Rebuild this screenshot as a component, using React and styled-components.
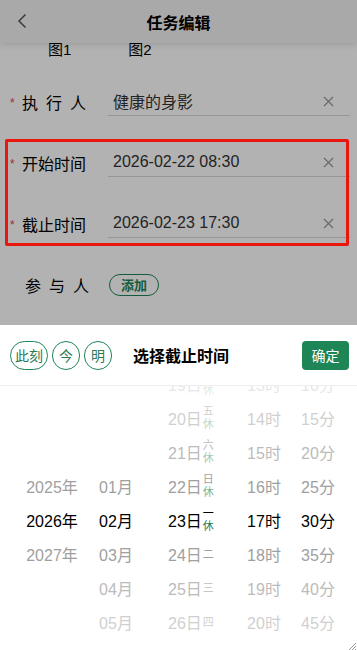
import styled, { createGlobalStyle } from 'styled-components';

const GlobalStyle = createGlobalStyle`
  html, body {
    margin: 0;
    padding: 0;
    background: #fff;
    font-family: "Liberation Sans", "Noto Sans CJK SC", sans-serif;
    overflow: hidden;
  }
  * { box-sizing: border-box; }
`;

const GREEN = '#1e8557';

const Page = styled.div`
  width: 357px;
  height: 650px;
  position: relative;
  overflow: hidden;
  background: #fff;
`;

const Header = styled.div`
  height: 43px;
  display: flex;
  align-items: center;
  justify-content: center;
  position: relative;
  background: #f2f2f2;
  box-shadow: 0 2px 6px rgba(0, 0, 0, 0.12);
  z-index: 2;
`;

const BackBtn = styled.div`
  position: absolute;
  left: 14px;
  top: 12px;
  width: 16px;
  height: 18px;
  display: flex;
  align-items: center;
  justify-content: center;
`;

const Title = styled.div`
  font-size: 16px;
  font-weight: bold;
  color: #000;
`;

const Tabs = styled.div`
  display: flex;
  gap: 57px;
  padding-left: 48px;
  height: 29px;
  font-size: 15px;
  line-height: 15px;
  margin-top: -1px;
  color: #000;
`;

const Form = styled.div`
  display: flex;
  flex-direction: column;
`;

const Group = styled.div`
  position: relative;
  &::after {
    content: '';
    position: absolute;
    left: 5px;
    right: 8px;
    top: 7px;
    bottom: 8px;
    border: 3px solid #e8160c;
    border-radius: 2px;
    z-index: 20;
  }
`;

const Row = styled.div`
  height: 61px;
  display: flex;
  align-items: center;
  padding-right: 7px;
`;

const Star = styled.span`
  width: 22px;
  padding-left: 10px;
  color: #e64340;
  font-size: 12px;
  visibility: ${(p) => (p.$hide ? 'hidden' : 'visible')};
  margin-top: 2px;
`;

const Label = styled.div`
  width: 64px;
  display: flex;
  justify-content: space-between;
  font-size: 16px;
  color: #000;
  margin-left: ${(p) => (p.$shift ? '3px' : '0')};
`;

const Field = styled.div`
  flex: 1;
  margin-left: 22px;
  height: 28px;
  border-bottom: 1px solid #d8d8d8;
  display: flex;
  align-items: center;
  padding-left: 5px;
  padding-right: 16px;
  font-size: 16px;
  color: #333;
`;

const Value = styled.span`
  flex: 1;
`;

const AddPill = styled.div`
  margin-left: 20px;
  width: 50px;
  height: 22px;
  border: 1.5px solid ${GREEN};
  border-radius: 11px;
  color: ${GREEN};
  font-size: 13px;
  font-weight: bold;
  display: flex;
  align-items: center;
  justify-content: center;
`;

const Mask = styled.div`
  position: absolute;
  inset: 0;
  background: rgba(0, 0, 0, 0.3);
  z-index: 10;
`;

const Sheet = styled.div`
  position: absolute;
  left: 0;
  right: 0;
  bottom: 0;
  height: 325px;
  background: #fff;
  z-index: 30;
  display: flex;
  flex-direction: column;
`;

const SheetHead = styled.div`
  height: 61px;
  border-bottom: 1px solid #eeeeee;
  display: flex;
  align-items: center;
  padding: 0 8px 0 10px;
`;

const Quick = styled.div`
  display: flex;
  gap: 4px;
`;

const QuickBtn = styled.div`
  height: 29px;
  min-width: 28px;
  padding: 0 ${(p) => (p.$wide ? '4px' : '0')};
  border: 1px solid ${GREEN};
  border-radius: 15px;
  color: #2a7a52;
  font-size: 14px;
  display: flex;
  align-items: center;
  justify-content: center;
`;

const SheetTitle = styled.div`
  margin-left: 21px;
  flex: 1;
  font-size: 16px;
  font-weight: bold;
  color: #000;
`;

const Confirm = styled.div`
  width: 47px;
  height: 29px;
  border-radius: 4px;
  background: ${GREEN};
  color: #fff;
  font-size: 14px;
  display: flex;
  align-items: center;
  justify-content: center;
`;

const Wheel = styled.div`
  flex: 1;
  overflow: hidden;
  position: relative;
  display: grid;
  grid-template-columns: 76px 52px 96px 52px 56px;
  padding-left: 14px;
`;

const Column = styled.div`
  display: flex;
  flex-direction: column;
  margin-top: ${(p) => p.$offset}px;
`;

const Item = styled.div`
  height: 34px;
  flex: none;
  display: flex;
  align-items: center;
  justify-content: center;
  font-size: 16px;
  color: ${(p) => (p.$dist === 0 ? '#000' : '#8f8f8f')};
  opacity: ${(p) => [1, 0.85, 0.6, 0.42, 0.22][p.$dist] ?? 0.15};
`;

const DayItem = styled(Item)`
  justify-content: flex-start;
  padding-left: 26px;
`;

const Week = styled.div`
  display: flex;
  flex-direction: column;
  align-items: center;
  font-size: 11px;
  line-height: 13px;
  margin-left: 1px;
  color: ${(p) => (p.$dist === 0 ? '#000' : '#8f8f8f')};
`;

const Rest = styled.span`
  color: ${(p) => (p.$dist === 0 ? '#2a7a52' : '#5faa80')};
`;

const Grip = styled.div`
  position: absolute;
  right: 0;
  bottom: 0;
  width: 12px;
  height: 12px;
`;

const Close = () => (
  <svg width="11" height="11" viewBox="0 0 11 11">
    <path d="M1 1L10 10M10 1L1 10" stroke="#999" strokeWidth="1.3" fill="none" />
  </svg>
);

const rows = (list, sel) => list.map((t, i) => ({ t, d: Math.abs(i - sel) }));

const ROW = 34;
const CENTER = 117;

const WheelColumn = ({ list, sel }) => (
  <Column $offset={CENTER - sel * ROW}>
    {rows(list, sel).map((r) => (
      <Item key={r.t} $dist={r.d}>{r.t}</Item>
    ))}
  </Column>
);

const days = [
  { n: 19, w: '四', rest: true },
  { n: 20, w: '五', rest: true },
  { n: 21, w: '六', rest: true },
  { n: 22, w: '日', rest: true },
  { n: 23, w: '一', rest: true },
  { n: 24, w: '二' },
  { n: 25, w: '三' },
  { n: 26, w: '四' },
];

const SpreadLabel = ({ text, shift }) => (
  <Label $shift={shift}>
    {text.split('').map((c, i) => (
      <span key={i}>{c}</span>
    ))}
  </Label>
);

const App = () => {
  return (
    <Page>
      <GlobalStyle />
      <Header>
        <BackBtn>
          <svg width="10" height="16" viewBox="0 0 10 16">
            <path d="M8.5 1.5L2 8l6.5 6.5" stroke="#555" strokeWidth="1.5" fill="none" />
          </svg>
        </BackBtn>
        <Title>任务编辑</Title>
      </Header>
      <Tabs>
        <span>图1</span>
        <span>图2</span>
      </Tabs>
      <Form>
        <Row>
          <Star>*</Star>
          <SpreadLabel text="执行人" />
          <Field>
            <Value>健康的身影</Value>
            <Close />
          </Field>
        </Row>
        <Group>
          <Row>
            <Star>*</Star>
            <SpreadLabel text="开始时间" />
            <Field>
              <Value>2026-02-22 08:30</Value>
              <Close />
            </Field>
          </Row>
          <Row>
            <Star>*</Star>
            <SpreadLabel text="截止时间" />
            <Field>
              <Value>2026-02-23 17:30</Value>
              <Close />
            </Field>
          </Row>
        </Group>
        <Row>
          <Star $hide>*</Star>
          <SpreadLabel text="参与人" shift />
          <AddPill>添加</AddPill>
        </Row>
      </Form>

      <Mask />

      <Sheet>
        <SheetHead>
          <Quick>
            <QuickBtn $wide>此刻</QuickBtn>
            <QuickBtn>今</QuickBtn>
            <QuickBtn>明</QuickBtn>
          </Quick>
          <SheetTitle>选择截止时间</SheetTitle>
          <Confirm>确定</Confirm>
        </SheetHead>
        <Wheel>
          <WheelColumn list={['2025年', '2026年', '2027年']} sel={1} />
          <WheelColumn list={['01月', '02月', '03月', '04月', '05月']} sel={1} />
          <Column $offset={CENTER - 4 * ROW}>
            {days.map((d, i) => {
              const dist = Math.abs(i - 4);
              return (
                <DayItem key={d.n} $dist={dist}>
                  {d.n}日
                  <Week $dist={dist}>
                    <span>{d.w}</span>
                    {d.rest && <Rest $dist={dist}>休</Rest>}
                  </Week>
                </DayItem>
              );
            })}
          </Column>
          <WheelColumn
            list={['13时', '14时', '15时', '16时', '17时', '18时', '19时', '20时']}
            sel={4}
          />
          <WheelColumn
            list={['10分', '15分', '20分', '25分', '30分', '35分', '40分', '45分']}
            sel={4}
          />
          <Grip>
            <svg width="12" height="12" viewBox="0 0 12 12">
              <path d="M11 3L3 11M11 6L6 11M11 9L9 11" stroke="#999" strokeWidth="1" />
            </svg>
          </Grip>
        </Wheel>
      </Sheet>
    </Page>
  );
};

export default App;
